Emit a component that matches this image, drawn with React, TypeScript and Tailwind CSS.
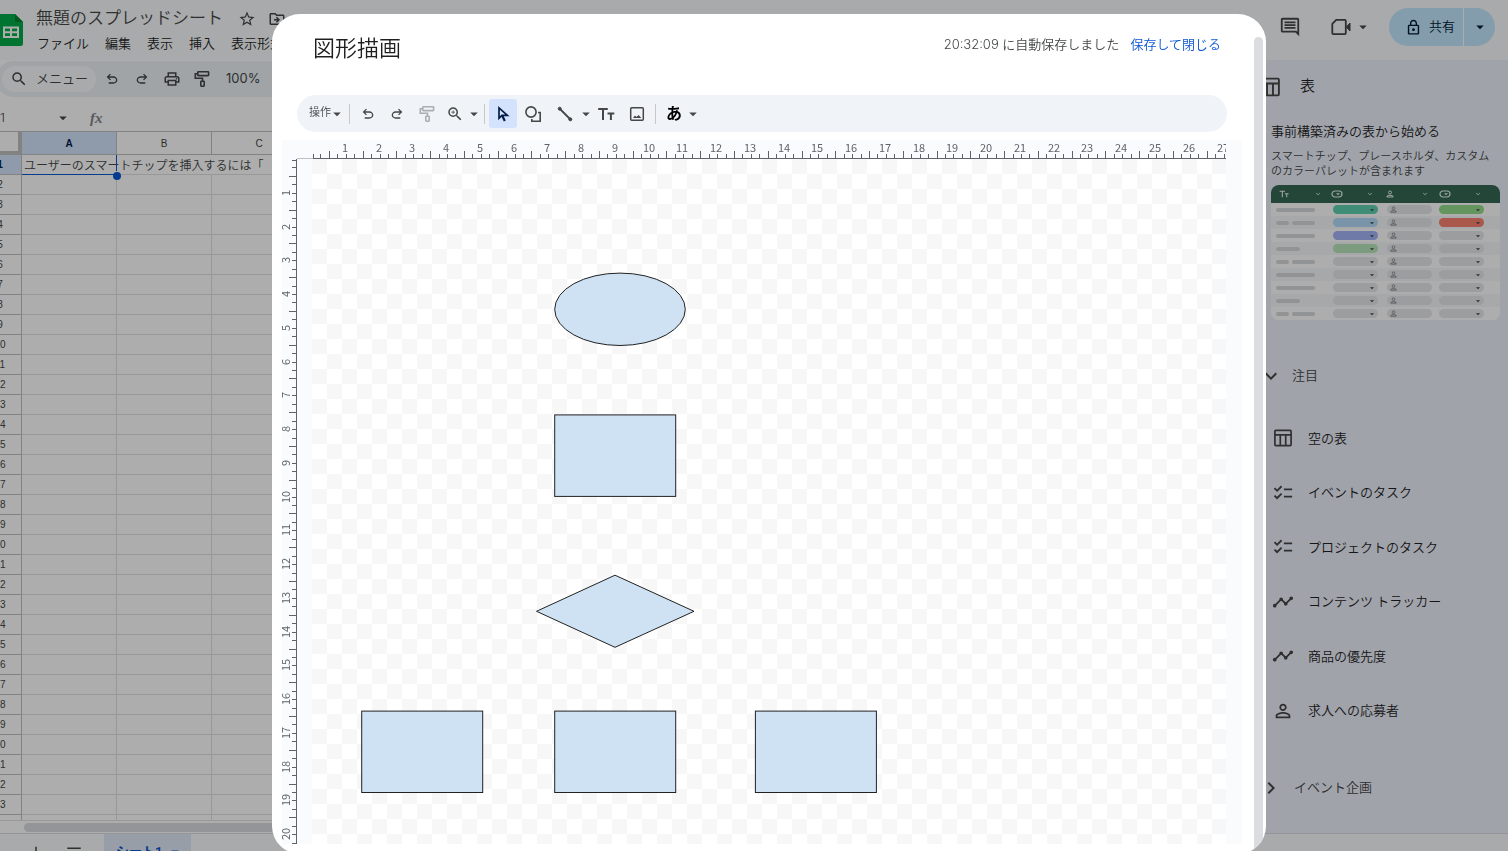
import type { ReactNode } from 'react';
import {
    MdArrowDropDown,
    MdChecklist,
    MdKeyboardArrowDown,
    MdKeyboardArrowRight,
    MdMenu,
    MdAdd,
    MdOutlineDriveFileMove,
    MdOutlineInsertComment,
    MdOutlineLock,
    MdOutlinePrint,
    MdPersonOutline,
    MdSearch,
    MdStarBorder,
    MdTimeline,
    MdZoomIn,
} from 'react-icons/md';

interface IconProps {
    className?: string;
}

const UndoIcon = ({ className = '' }: IconProps) => (
    <svg viewBox="0 -960 960 960" className={className} fill="currentColor" aria-hidden="true">
        <path d="M280-200v-80h284q63 0 109.5-40T720-420q0-60-46.5-100T564-560H312l104 104-56 56-200-200 200-200 56 56-104 104h252q97 0 166.5 63T800-420q0 94-69.5 157T564-200H280Z" />
    </svg>
);

const RedoIcon = ({ className = '' }: IconProps) => (
    <svg viewBox="0 -960 960 960" className={className} fill="currentColor" aria-hidden="true">
        <path d="M396-200q-97 0-166.5-63T160-420q0-94 69.5-157T396-640h252L544-744l56-56 200 200-200 200-56-56 104-104H396q-63 0-109.5 40T240-420q0 60 46.5 100T396-280h284v80H396Z" />
    </svg>
);

const RollerIcon = ({ className = '' }: IconProps) => (
    <svg viewBox="0 0 18 18" className={className} fill="none" stroke="currentColor" strokeWidth="1.6" aria-hidden="true">
        <rect x="4.8" y="1.8" width="10.8" height="3.8" rx="0.6" />
        <path d="M4.8 3.7H2.3v4.5h7.2v3" />
        <rect x="7.8" y="11.2" width="3.4" height="5" rx="0.6" />
    </svg>
);

const CursorIcon = ({ className = '' }: IconProps) => (
    <svg viewBox="0 0 18 18" className={className} fill="none" stroke="currentColor" strokeWidth="1.7" aria-hidden="true">
        <path d="M5 2.8v10.4l3-2.8h5.4Z" />
        <path d="M8.2 10.6l2.6 5.4" strokeWidth="2.2" />
    </svg>
);

const ShapeIcon = ({ className = '' }: IconProps) => (
    <svg viewBox="0 0 18 18" className={className} fill="none" stroke="currentColor" strokeWidth="1.6" aria-hidden="true">
        <circle cx="7" cy="7" r="5.1" />
        <path d="M14 7.5h2.2v8.7H7.8V14" />
    </svg>
);

const LineIcon = ({ className = '' }: IconProps) => (
    <svg viewBox="0 0 18 18" className={className} stroke="currentColor" fill="currentColor" aria-hidden="true">
        <path d="M3.5 3.5l11 11" strokeWidth="1.8" />
        <circle cx="3.7" cy="3.7" r="1.5" />
        <circle cx="14.3" cy="14.3" r="1.5" />
    </svg>
);

const TextIcon = ({ className = '' }: IconProps) => (
    <svg viewBox="0 0 18 18" className={className} fill="none" stroke="currentColor" strokeWidth="2" aria-hidden="true">
        <path d="M1.2 4h9.6M6 4v11M10.5 8.500h6.800M13.900 8.500V15" />
    </svg>
);

const ImageIcon = ({ className = '' }: IconProps) => (
    <svg viewBox="0 0 18 18" className={className} fill="none" stroke="currentColor" strokeWidth="1.5" aria-hidden="true">
        <rect x="2.7" y="2.7" width="12.6" height="12.6" rx="1" />
        <path d="M5 13l2-2.400 1.600 1.500 2-2.200L13.300 13Z" fill="currentColor" stroke="none" />
    </svg>
);

const VideoIcon = ({ className = '' }: IconProps) => (
    <svg viewBox="0 0 22 22" className={className} fill="none" stroke="currentColor" strokeWidth="1.8" aria-hidden="true">
        <path d="M6.200 3.900h8.600q1 0 1 1v12.200q0 1-1 1H3.300q-1 0-1-1V7.900Z" strokeLinejoin="round" />
        <path d="M16.300 11l3.700-4v8Z" fill="currentColor" strokeWidth="1" />
    </svg>
);

const TableIcon = ({ className = '' }: IconProps) => (
    <svg viewBox="0 0 20 20" className={className} fill="none" stroke="currentColor" strokeWidth="1.7" aria-hidden="true">
        <rect x="1.900" y="2.400" width="16.200" height="15.200" rx="1" />
        <path d="M2 6.800h16M7.300 7v10.500M12.700 7v10.500" />
    </svg>
);

const SheetsLogo = () => (
    <svg viewBox="0 0 26 32" className="h-8 w-[26px]" aria-hidden="true">
        <path d="M2.500 0H18l8 8v21.500a2.500 2.500 0 0 1-2.500 2.500h-21A2.500 2.500 0 0 1 0 29.500v-27A2.500 2.500 0 0 1 2.500 0Z" fill="#00ac47" />
        <path d="M18 0l8 8h-8Z" fill="#00832d" />
        <path d="M6 12.500h16v11.500H6Zm2 2v2.800h5v-2.800Zm7 0v2.800h5v-2.800Zm-7 4.800V22h5v-2.700Zm7 0V22h5v-2.700Z" fill="#fff" fillRule="evenodd" />
    </svg>
);

const Caret = () => <MdArrowDropDown className="h-[18px] w-[18px] shrink-0" />;

const menus = ['ファイル', '編集', '表示', '挿入', '表示形式'];
const columns = ['A', 'B', 'C', 'D', 'E', 'F', 'G', 'H', 'I', 'J', 'K', 'L', 'M'];
const rows = Array.from({ length: 60 }, (_, i) => i + 1);

function Header() {
    return (
        <header className="flex h-[60px] shrink-0 items-start justify-between bg-[#f9fbfd] text-[#444746]">
            <div className="flex">
                <div className="-ml-[3px] pt-[14px]">
                    <SheetsLogo />
                </div>
                <div className="ml-[13px]">
                    <div className="flex h-9 items-center pt-[2px]">
                        <h1 className="text-[17px]">無題のスプレッドシート</h1>
                        <button aria-label="スターを付ける" className="ml-[15px]">
                            <MdStarBorder className="h-[18px] w-[18px]" />
                        </button>
                        <button aria-label="移動" className="ml-3">
                            <MdOutlineDriveFileMove className="h-[18px] w-[18px]" />
                        </button>
                    </div>
                    <nav className="flex gap-4 pl-px text-[13px] leading-4 text-[#1f1f1f]">
                        {menus.map((m) => (
                            <button key={m}>{m}</button>
                        ))}
                    </nav>
                </div>
            </div>
            <div className="flex items-center pt-2 pr-[13px]">
                <button aria-label="コメント">
                    <MdOutlineInsertComment className="h-[22px] w-[22px]" />
                </button>
                <button aria-label="通話" className="ml-[29px] flex items-center">
                    <VideoIcon className="h-[22px] w-[22px]" />
                    <span className="ml-[2px]"><Caret /></span>
                </button>
                <div className="ml-[17px] flex h-[38px] rounded-full bg-[#c2e7ff] text-[#001d35]">
                    <button className="flex w-[74px] items-center gap-[7px] pl-4 text-[13px]">
                        <MdOutlineLock className="h-[17px] w-[17px]" />
                        共有
                    </button>
                    <button aria-label="共有オプション" className="flex w-8 items-center justify-center border-l border-white">
                        <Caret />
                    </button>
                </div>
            </div>
        </header>
    );
}

function SheetToolbar() {
    return (
        <div className="mt-px -ml-1 flex h-9 shrink-0 items-center rounded-l-full bg-[#ecf2f6] pl-[6px] text-[#444746]">
            <label className="flex h-[26px] w-[94px] items-center gap-2 rounded-full bg-[#f9fbfd] pl-2 text-[13px]">
                <MdSearch className="h-[18px] w-[18px] shrink-0" />
                <input className="w-14 bg-transparent outline-none placeholder:text-[#444746]" placeholder="メニュー" />
            </label>
            <button aria-label="元に戻す" className="flex w-8 justify-center"><UndoIcon className="h-4 w-4" /></button>
            <button aria-label="やり直し" className="flex w-7 justify-center"><RedoIcon className="h-4 w-4" /></button>
            <button aria-label="印刷" className="flex w-8 justify-center"><MdOutlinePrint className="h-[18px] w-[18px]" /></button>
            <button aria-label="書式を貼り付け" className="flex w-7 justify-center"><RollerIcon className="h-[18px] w-[18px]" /></button>
            <button className="pl-[10px] font-['Inter',sans-serif] text-[13px] font-normal">100%</button>
        </div>
    );
}

function FormulaBar() {
    return (
        <div className="flex h-[34px] shrink-0 items-center pt-2 text-[#444746]">
            <span className="-ml-[9px] w-[63px] text-[13px] text-[#1f1f1f]">A1</span>
            <Caret />
            <span className="ml-[18px] font-['Liberation_Serif',serif] text-[15px] font-bold text-[#80868b] italic">fx</span>
        </div>
    );
}

function Grid() {
    return (
        <div className="min-h-0 flex-1 overflow-hidden border-t border-[#c0c0c0]">
            <table className="-ml-[21px] w-[1278px] table-fixed border-separate border-spacing-0 font-['Liberation_Sans','Noto_Sans_CJK_JP',sans-serif] text-[10px]">
                <thead>
                    <tr className="h-[23px]">
                        <th className="w-[43px] border-r-4 border-b-4 border-[#c0c0c0] p-0" />
                        {columns.map((c) => (
                            <th
                                key={c}
                                className={`w-[95px] border-r border-b border-[#c0c0c0] p-0 ${c === 'A' ? 'bg-[#d3e3fd] font-bold text-[#041e49]' : 'font-normal text-[#444746]'}`}
                            >
                                {c}
                            </th>
                        ))}
                    </tr>
                </thead>
                <tbody>
                    {rows.map((r) => (
                        <tr key={r} className="h-5">
                            <th className={`border-r border-b border-[#c0c0c0] p-0 ${r === 1 ? 'bg-[#d3e3fd] font-bold text-[#041e49]' : 'font-normal text-[#444746]'}`}>
                                {r}
                            </th>
                            {columns.map((c) =>
                                r === 1 && c === 'A' ? (
                                    <td key={c} className="relative border-b border-[#0b57d0] p-0 pl-[2px]">
                                        <div className="h-[18px] w-0 text-[12px] leading-[21px] whitespace-nowrap text-[#444746]">
                                            ユーザーのスマートチップを挿入するには「
                                        </div>
                                        <span className="absolute top-0 right-0 h-4 w-px bg-[#0b57d0]" />
                                        <span className="absolute top-[17px] -right-1 h-2 w-2 rounded-full bg-[#0b57d0]" />
                                    </td>
                                ) : (
                                    <td key={c} className={`border-b border-[#e1e1e1] p-0 ${r === 1 && c < 'D' ? '' : 'border-r'}`} />
                                ),
                            )}
                        </tr>
                    ))}
                </tbody>
            </table>
        </div>
    );
}

// pill colours for the first and last option columns of the preview
const previewRows = [
    { bars: 'full', status: 'bg-[#5fd0b0]', level: 'bg-[#96dc8c]' },
    { bars: 'split', status: 'bg-[#b4dcfa]', level: 'bg-[#fb8270]' },
    { bars: 'full', status: 'bg-[#a4b4fa]', level: 'bg-[#e6e8ea]' },
    { bars: 'short', status: 'bg-[#b9e6bb]', level: 'bg-[#e6e8ea]' },
    { bars: 'split', status: 'bg-[#e6e8ea]', level: 'bg-[#e6e8ea]' },
    { bars: 'full', status: 'bg-[#e6e8ea]', level: 'bg-[#e6e8ea]' },
    { bars: 'full', status: 'bg-[#e6e8ea]', level: 'bg-[#e6e8ea]' },
    { bars: 'short', status: 'bg-[#e6e8ea]', level: 'bg-[#e6e8ea]' },
    { bars: 'split', status: 'bg-[#e6e8ea]', level: 'bg-[#e6e8ea]' },
];

function PreviewPill({ color }: { color: string }) {
    return (
        <span className={`flex h-[9px] w-[45px] items-center justify-end rounded-full pr-px ${color}`}>
            <MdArrowDropDown className="h-[10px] w-[10px]" />
        </span>
    );
}

const ChipIcon = () => (
    <svg viewBox="0 0 12 8" className="h-2 w-3" fill="none" stroke="currentColor" aria-hidden="true">
        <rect x="1" y="1" width="10" height="6" rx="3" strokeWidth="1.2" />
        <path d="M5 3.200h4L7 5.200Z" fill="currentColor" stroke="none" />
    </svg>
);

const AssigneeIcon = ({ className = '' }: IconProps) => (
    <svg viewBox="0 0 8 8" className={className} fill="none" stroke="currentColor" aria-hidden="true">
        <circle cx="4" cy="2.500" r="1.500" />
        <path d="M1 7V6q3-1.600 6 0v1Z" />
    </svg>
);

function PreviewHead({ children }: { children: ReactNode }) {
    return (
        <span className="flex w-[43px] items-center justify-between">
            {children}
            <MdKeyboardArrowDown className="h-2 w-2" />
        </span>
    );
}

function TablePreview() {
    return (
        <div className="w-[229px] overflow-hidden rounded-[8px] bg-white text-[#444746]">
            <div className="grid h-[18px] grid-cols-[52px_55px_53px_43px] bg-[#356854] pl-2 text-[#e6f4ea]">
                <PreviewHead><TextIcon className="h-[10px] w-[10px]" /></PreviewHead>
                <PreviewHead><ChipIcon /></PreviewHead>
                <PreviewHead><AssigneeIcon className="h-2 w-2" /></PreviewHead>
                <PreviewHead><ChipIcon /></PreviewHead>
            </div>
            {previewRows.map((row, i) => (
                <div
                    key={i}
                    className={`grid h-[13px] grid-cols-[57px_54px_52px_45px] items-center pl-[5px] ${i % 2 ? 'bg-[#f6f8f9]' : 'bg-white'}`}
                >
                    <span className="flex gap-[3px]">
                        {row.bars === 'full' && <span className="h-1 w-[39px] rounded-full bg-[#d7d9dc]" />}
                        {row.bars === 'short' && <span className="h-1 w-6 rounded-full bg-[#d7d9dc]" />}
                        {row.bars === 'split' && (
                            <>
                                <span className="h-1 w-[13px] rounded-full bg-[#d7d9dc]" />
                                <span className="h-1 w-[23px] rounded-full bg-[#d7d9dc]" />
                            </>
                        )}
                    </span>
                    <PreviewPill color={row.status} />
                    <span className="flex h-[9px] w-[45px] items-center rounded-full bg-[#e6e8ea] pl-[3px] text-[#80868b]">
                        <AssigneeIcon className="h-[7px] w-[7px]" />
                    </span>
                    <PreviewPill color={row.level} />
                </div>
            ))}
        </div>
    );
}

const templates = [
    { label: '空の表', icon: <TableIcon className="h-5 w-5" /> },
    { label: 'イベントのタスク', icon: <MdChecklist className="h-[22px] w-[22px]" /> },
    { label: 'プロジェクトのタスク', icon: <MdChecklist className="h-[22px] w-[22px]" /> },
    { label: 'コンテンツ トラッカー', icon: <MdTimeline className="h-[22px] w-[22px]" /> },
    { label: '商品の優先度', icon: <MdTimeline className="h-[22px] w-[22px]" /> },
    { label: '求人への応募者', icon: <MdPersonOutline className="h-[22px] w-[22px]" /> },
];

function Sidebar() {
    return (
        <aside className="w-[260px] shrink-0 overflow-hidden bg-[#edf1fc] pl-[11px] text-[#1f1f1f]">
            <div className="flex h-[53px] items-center gap-[19px]">
                <TableIcon className="h-[22px] w-[22px] text-[#444746]" />
                <h2 className="text-[15px]">表</h2>
            </div>
            <div className="pl-3">
                <h3 className="mt-[9px] text-[13px] leading-5">事前構築済みの表から始める</h3>
                <p className="mt-[7px] mb-[6px] text-[11px] leading-[15px] text-[#444746]">
                    スマートチップ、プレースホルダ、カスタム
                    <br />
                    のカラーパレットが含まれます
                </p>
                <TablePreview />
            </div>
            <button className="mt-[46px] flex h-5 items-center gap-[9px] text-[13px] text-[#444746]">
                <MdKeyboardArrowDown className="h-6 w-6" />
                注目
            </button>
            <ul className="mt-[25px] grid h-[327px] grid-rows-6 pl-3 text-[13px]">
                {templates.map((t) => (
                    <li key={t.label} className="flex">
                        <button className="flex items-center">
                            <span className="flex w-[23px] justify-center text-[#444746]">{t.icon}</span>
                            <span className="ml-[14px]">{t.label}</span>
                        </button>
                    </li>
                ))}
            </ul>
            <button className="mt-10 flex h-5 items-center gap-[11px] text-[13px] text-[#444746]">
                <MdKeyboardArrowRight className="h-6 w-6" />
                イベント企画
            </button>
        </aside>
    );
}

function SheetTabs() {
    return (
        <footer className="-mb-[18px] flex h-9 shrink-0 items-center border-t border-[#dadce0] bg-[#f9fbfd] pl-[27px] text-[#444746]">
            <button aria-label="シートを追加"><MdAdd className="h-[18px] w-[18px]" /></button>
            <button aria-label="すべてのシート" className="ml-5"><MdMenu className="h-[18px] w-[18px]" /></button>
            <button className="ml-[21px] flex h-full w-[87px] items-center gap-1 bg-[#e1e9f7] pl-3 text-[13px] font-bold text-[#0b57d0]">
                シート1
                <Caret />
            </button>
        </footer>
    );
}

// one centimetre on the drawing is 33.76 px at the current zoom
const CM = 33.76;

interface RulerMark {
    pos: number;
    long: boolean;
    label: number | null;
}

const rulerMarks = (length: number): RulerMark[] =>
    Array.from({ length: length * 4 }, (_, i) => ({
        pos: Math.max(1, Math.round((i * CM) / 4)),
        long: i % 4 === 2,
        label: i > 0 && i % 4 === 0 ? i / 4 : null,
    }));

function TopRuler() {
    return (
        <svg className="h-[19px] w-full font-['Noto_Sans_CJK_JP',sans-serif] font-normal text-[#5f6368]" aria-hidden="true">
            <g transform="translate(15 0)">
                {rulerMarks(40).map((m) => (
                    <g key={m.pos}>
                        <rect x={m.pos} y={m.long ? 11 : 14} width="1" height={m.long ? 8 : 5} fill="currentColor" />
                        {m.label && (
                            <text x={m.pos - 1} y="12" textAnchor="middle" fontSize="11" fill="currentColor">{m.label}</text>
                        )}
                    </g>
                ))}
                <rect x="-16" y="18" width="17" height="1" fill="#bdc1c6" />
                <rect x="1" y="18" width="2100" height="1" fill="currentColor" />
            </g>
        </svg>
    );
}

function LeftRuler() {
    return (
        <svg className="h-full w-[15px] font-['Noto_Sans_CJK_JP',sans-serif] font-normal text-[#5f6368]" aria-hidden="true">
            {rulerMarks(30).map((m) => (
                <g key={m.pos}>
                    <rect x={m.long ? 7 : 10} y={m.pos} width={m.long ? 7 : 4} height="1" fill="currentColor" />
                    {m.label && (
                        <text transform={`translate(8 ${m.pos}) rotate(-90)`} textAnchor="middle" fontSize="11" fill="currentColor">
                            {m.label}
                        </text>
                    )}
                </g>
            ))}
            <rect x="14" y="0" width="1" height="1400" fill="currentColor" />
        </svg>
    );
}

function Canvas() {
    return (
        <svg
            role="img"
            aria-label="フローチャート"
            className="mr-4 ml-[15px] h-full flex-1 bg-[repeating-conic-gradient(#fff_0_25%,#f7f7f7_0_50%)] bg-[length:30px_30px]"
        >
            <g fill="#cfe2f3" stroke="#222" strokeWidth="1">
                <ellipse cx="308" cy="150.300" rx="65.300" ry="36.200" />
                <rect x="242.700" y="255.900" width="121" height="81.500" />
                <path d="M224.500 452.300L303 416.200l79 36.100-79 36Z" />
                <rect x="49.700" y="552.100" width="121" height="81.400" />
                <rect x="242.700" y="552.100" width="121" height="81.400" />
                <rect x="443.400" y="552.100" width="121" height="81.400" />
            </g>
        </svg>
    );
}

function ToolButton({ label, width, children, disabled = false }: { label: string; width: string; children: ReactNode; disabled?: boolean }) {
    return (
        <button aria-label={label} disabled={disabled} className={`flex h-7 shrink-0 items-center justify-center disabled:opacity-40 ${width}`}>
            {children}
        </button>
    );
}

const Divider = () => <span className="h-5 w-px shrink-0 bg-[#c7c7c7]" />;

function DrawingToolbar() {
    return (
        <div className="mr-[27px] ml-[25px] flex h-[37px] shrink-0 items-center rounded-full bg-[#f0f4f9] pl-3 text-[#444746]">
            <button className="mr-1 flex w-9 items-center text-[11px] whitespace-nowrap">
                操作
                <span className="-ml-[3px]"><Caret /></span>
            </button>
            <Divider />
            <div className="flex pl-1">
                <ToolButton label="元に戻す" width="w-7"><UndoIcon className="h-4 w-4" /></ToolButton>
                <ToolButton label="やり直し" width="w-[30px]"><RedoIcon className="h-4 w-4" /></ToolButton>
                <ToolButton label="書式を貼り付け" width="w-[30px]" disabled><RollerIcon className="h-[18px] w-[18px]" /></ToolButton>
                <ToolButton label="ズーム" width="w-[26px]"><MdZoomIn className="h-[18px] w-[18px]" /></ToolButton>
                <ToolButton label="ズーム率" width="w-[11px]"><Caret /></ToolButton>
            </div>
            <span className="w-[5px]" />
            <Divider />
            <div className="flex items-center pl-1">
                <button aria-label="選択" aria-pressed="true" className="flex h-[29px] w-7 items-center justify-center rounded-[3px] bg-[#d3e3fd] text-[#041e49]">
                    <CursorIcon className="h-[18px] w-[18px]" />
                </button>
                <ToolButton label="図形" width="w-8"><ShapeIcon className="h-[18px] w-[18px]" /></ToolButton>
                <ToolButton label="線" width="w-8"><LineIcon className="h-[18px] w-[18px]" /></ToolButton>
                <ToolButton label="線の種類" width="w-[10px]"><Caret /></ToolButton>
                <ToolButton label="テキスト ボックス" width="w-[30px]"><TextIcon className="h-[18px] w-[18px]" /></ToolButton>
                <ToolButton label="画像" width="w-8"><ImageIcon className="h-[18px] w-[18px]" /></ToolButton>
            </div>
            <span className="w-[2px]" />
            <Divider />
            <div className="flex pl-1 text-base font-bold text-black">
                <ToolButton label="入力ツール" width="w-7">あ</ToolButton>
                <ToolButton label="入力ツールの選択" width="w-[10px]"><span className="text-[#444746]"><Caret /></span></ToolButton>
            </div>
        </div>
    );
}

function DrawingDialog() {
    return (
        <div className="fixed inset-0 flex overflow-hidden bg-black/32 pt-[14px] pr-[242px] pl-[272px]">
            <div role="dialog" aria-labelledby="drawing-title" className="-mb-[3px] flex min-w-0 flex-1 overflow-hidden rounded-[28px] bg-white pr-[3px]">
                <div className="flex min-w-0 flex-1 flex-col">
                    <div className="flex h-[81px] shrink-0 items-start justify-between pt-[17px] pr-[33px] pl-[41px]">
                        <h2 id="drawing-title" className="text-[22px] leading-9 text-[#1f1f1f]">図形描画</h2>
                        <p className="flex gap-[11px] pt-[3px] font-['Inter','Noto_Sans_CJK_JP',sans-serif] text-[13px] leading-5 text-[#444746]">
                            <span>20:32:09 に自動保存しました</span>
                            <button className="text-[#0b57d0]">保存して閉じる</button>
                        </p>
                    </div>
                    <DrawingToolbar />
                    <div className="mt-2 mr-3 mb-[10px] ml-[10px] flex min-h-0 flex-1 flex-col overflow-hidden bg-[#f9fbfd]">
                        <div className="flex h-[19px] shrink-0 pr-4 pl-[15px]">
                            <TopRuler />
                        </div>
                        <div className="flex min-h-0 flex-1">
                            <LeftRuler />
                            <Canvas />
                        </div>
                    </div>
                </div>
                <div className="mt-[23px] w-[9px] shrink-0 rounded-t-full bg-[#dadce0]" />
            </div>
        </div>
    );
}

export default function App() {
    return (
        <div className="flex h-screen flex-col overflow-hidden bg-white font-['Roboto','Noto_Sans_CJK_JP',sans-serif] font-[350]">
            <Header />
            <div className="flex min-h-0 flex-1">
                <main className="flex min-w-0 flex-1 flex-col">
                    <SheetToolbar />
                    <FormulaBar />
                    <Grid />
                    <div className="flex h-[13px] shrink-0 items-center border-t border-[#e1e1e1] pl-6">
                        <div className="h-[9px] w-3/5 rounded-full bg-[#dadce0]" />
                    </div>
                </main>
                <Sidebar />
            </div>
            <SheetTabs />
            <DrawingDialog />
        </div>
    );
}
